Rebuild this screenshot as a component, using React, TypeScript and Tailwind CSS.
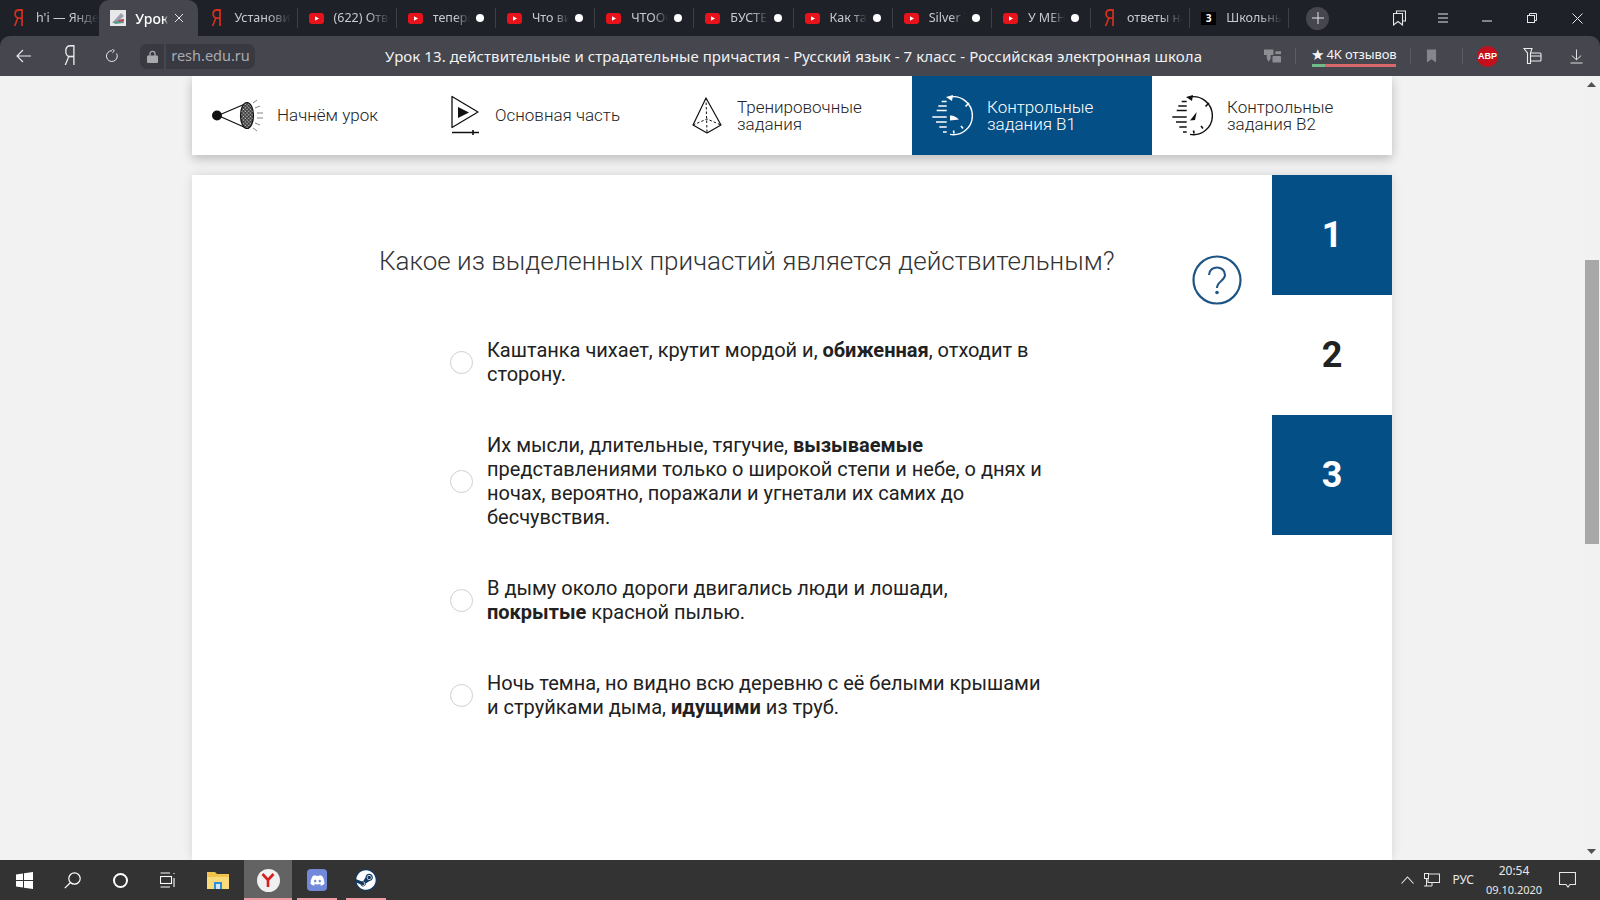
import React from 'react';
import { FaDiscord, FaSteam } from 'react-icons/fa';

type TabItem = { icon: 'ya' | 'yt' | 'resh' | 'school'; title: string; dot?: boolean; active?: boolean };

const tabs: TabItem[] = [
    { icon: 'ya', title: "h'i — Яндекс" },
    { icon: 'resh', title: 'Урок 13. действ', active: true },
    { icon: 'ya', title: 'Установить' },
    { icon: 'yt', title: '(622) Ответы' },
    { icon: 'yt', title: 'теперь', dot: true },
    { icon: 'yt', title: 'Что видно', dot: true },
    { icon: 'yt', title: 'ЧТООО', dot: true },
    { icon: 'yt', title: 'БУСТЕР', dot: true },
    { icon: 'yt', title: 'Как так', dot: true },
    { icon: 'yt', title: 'Silver Tu', dot: true },
    { icon: 'yt', title: 'У МЕНЯ', dot: true },
    { icon: 'ya', title: 'ответы на' },
    { icon: 'school', title: 'Школьные' },
];

const TabIcon = ({ kind }: { kind: TabItem['icon'] }) => {
    if (kind === 'ya') {
        return <span className="w-[15px] shrink-0 scale-x-75 text-center text-[24px] leading-none text-[#d4301c] font-['Roboto',sans-serif]">Я</span>;
    }
    if (kind === 'yt') {
        return (
            <svg width="15" height="11" viewBox="0 0 15 11" className="shrink-0">
                <rect width="15" height="11" rx="3" fill="#e8121a" />
                <path d="M6 3.2 L10 5.5 L6 7.8 Z" fill="#fff" />
            </svg>
        );
    }
    if (kind === 'school') {
        return <span className="flex h-[13px] w-[15px] shrink-0 items-center justify-center bg-black text-[10px] font-bold leading-none text-white">З</span>;
    }
    return (
        <svg width="16" height="16" viewBox="0 0 16 16" className="shrink-0">
            <rect width="16" height="16" fill="#e8e8ea" />
            <path d="M2 13 L11 3 L14 6 L6 13 Z" fill="#9aa0aa" />
            <path d="M3 12 L13 9 L14 13 L5 14 Z" fill="#5b9c8a" />
            <path d="M8 10 L14 9 L14 11 L9 12 Z" fill="#c4485a" />
        </svg>
    );
};

const TabBar = () => (
    <div className="flex h-9 shrink-0 items-stretch bg-[#1f2129]">
        <div className="flex w-[1290px] shrink-0">
            {tabs.map((t, i) => (
                <div
                    key={i}
                    className={
                        t.active
                            ? 'flex h-9 w-[99.2px] shrink-0 items-center rounded-t-[10px] bg-[#45464e] pl-[11px] pr-[14px]'
                            : 'flex h-9 w-[99.2px] shrink-0 items-center pl-[11px]'
                    }
                >
                    <TabIcon kind={t.icon} />
                    <span className={t.active
                        ? "ml-[9px] min-w-0 flex-1 overflow-hidden whitespace-nowrap text-[14px] font-medium text-white font-['Noto_Sans',sans-serif] [mask-image:linear-gradient(to_right,black_88%,transparent)]"
                        : "ml-[10px] min-w-0 flex-1 overflow-hidden whitespace-nowrap text-[12.5px] text-[#c9cad0] font-['Noto_Sans',sans-serif] [mask-image:linear-gradient(to_right,black_60%,transparent)]"}>
                        {t.title}
                    </span>
                    {t.dot && <span className="ml-[6px] h-[8px] w-[8px] shrink-0 rounded-full bg-white" />}
                    {t.active && (
                        <svg width="10" height="10" viewBox="0 0 10 10" className="ml-[6px] shrink-0" stroke="#e6e6e8" strokeWidth="1">
                            <path d="M1 1 L9 9 M9 1 L1 9" />
                        </svg>
                    )}
                    {!t.active && i !== 0 && <span className={t.dot ? 'ml-[11px] h-[20px] w-px shrink-0 bg-[#3e4048]' : 'ml-[6px] h-[20px] w-px shrink-0 bg-[#3e4048]'} />}
                </div>
            ))}
        </div>
        <div className="flex items-center pl-[16px]">
            <span className="flex h-[23px] w-[23px] items-center justify-center rounded-full bg-[#45464e]">
                <svg width="12" height="12" viewBox="0 0 12 12" stroke="#e6e6e8" strokeWidth="1"><path d="M6 0 V12 M0 6 H12" /></svg>
            </span>
        </div>
        <div className="ml-auto flex items-center text-[#e6e6e8]">
            <span className="flex w-[44px] justify-center">
                <svg width="13" height="16" viewBox="0 0 13 16" fill="none" stroke="currentColor" strokeWidth="1.1">
                    <path d="M3.5 3 V1 H12.5 V11 H9.5" /><path d="M0.5 3.5 H9.5 V15 L5 11.5 L0.5 15 Z" />
                </svg>
            </span>
            <span className="flex w-[44px] justify-center">
                <svg width="12" height="10" viewBox="0 0 12 10" stroke="currentColor" strokeWidth="1"><path d="M1 1 H11 M1 5 H11 M1 9 H11" /></svg>
            </span>
            <span className="flex w-[44px] justify-center">
                <svg width="10" height="10" viewBox="0 0 10 10" stroke="currentColor" strokeWidth="1"><path d="M0 8 H10" /></svg>
            </span>
            <span className="flex w-[45px] justify-center">
                <svg width="10" height="10" viewBox="0 0 10 10" fill="none" stroke="currentColor" strokeWidth="1">
                    <rect x="0.5" y="2.5" width="7" height="7" /><path d="M2.5 2.5 V0.5 H9.5 V7.5 H7.5" />
                </svg>
            </span>
            <span className="flex w-[46px] justify-center">
                <svg width="11" height="11" viewBox="0 0 11 11" stroke="currentColor" strokeWidth="1"><path d="M0.5 0.5 L10.5 10.5 M10.5 0.5 L0.5 10.5" /></svg>
            </span>
        </div>
    </div>
);

const Sep = () => <span className="block h-[16px] w-px shrink-0 bg-[#5b5c64]" />;

const AddressBar = () => (
    <div className="flex h-10 shrink-0 items-center rounded-t-[10px] bg-[#45464e] pl-[16px] font-['Noto_Sans',sans-serif]">
        <svg width="16" height="14" viewBox="0 0 16 14" fill="none" stroke="#ececed" strokeWidth="1.1" className="shrink-0">
            <path d="M15 7 H1 M7 1 L1 7 L7 13" />
        </svg>
        <span className="ml-[30px] w-[14px] shrink-0 scale-x-75 text-center text-[27px] font-light leading-none text-[#ececed] font-['Roboto',sans-serif]">Я</span>
        <svg width="14" height="14" viewBox="0 0 14 14" fill="none" stroke="#ececed" strokeWidth="1" className="ml-[29px] shrink-0">
            <path d="M11.6 4.5 A5.4 5.4 0 1 1 7 1.7 M7.4 0 L9.4 2 L7.4 3.8" />
        </svg>
        <span className="ml-[21px] flex h-[25px] w-[24px] shrink-0 items-center justify-center rounded-l-[7px] bg-[#393a41]">
            <svg width="11" height="13" viewBox="0 0 11 13">
                <path d="M3 6 V3.8 A2.5 2.5 0 0 1 8 3.8 V6" fill="none" stroke="#a8a9ae" strokeWidth="1.3" />
                <rect y="5.5" width="11" height="7.5" rx="1" fill="#a8a9ae" />
            </svg>
        </span>
        <span className="ml-[2px] flex h-[25px] w-[89px] shrink-0 items-center justify-center rounded-r-[7px] bg-[#393a41] text-[14.5px] text-[#a9aaaf]">resh.edu.ru</span>
        <span className="ml-[130px] shrink-0 whitespace-nowrap text-[15px] tracking-[0.07px] text-[#f2f2f3]">
            Урок 13. действительные и страдательные причастия - Русский язык - 7 класс - Российская электронная школа
        </span>
        <div className="ml-auto flex items-center">
            <svg width="17" height="16" viewBox="0 0 18 16" className="shrink-0" fill="#8d8e94">
                <path d="M0 1 H10 V7 H7 V11 L5 14 L3 11 V7 H0 Z" />
                <rect x="9" y="8" width="9" height="7" rx="1" />
                <rect x="12" y="3" width="6" height="3" />
            </svg>
            <span className="ml-[14px]"><Sep /></span>
            <div className="ml-[16px] flex w-[84px] shrink-0 flex-col">
                <span className="flex items-center justify-center gap-[2px] whitespace-nowrap text-[13px] leading-[17px] text-[#f5f5f5]">
                    <span className="text-[15px] leading-none">★</span>
                    <span className="tracking-[-0.1px]">4K отзывов</span>
                </span>
                <span className="mt-[1px] flex h-[3px] w-full">
                    <span className="w-[13px] bg-[#6dbb8a]" />
                    <span className="flex-1 bg-[#d8686a]" />
                </span>
            </div>
            <span className="ml-[14px]"><Sep /></span>
            <svg width="11" height="14" viewBox="0 0 12 14" fill="#85868c" className="ml-[15px] shrink-0">
                <path d="M1 0 H11 V14 L6 10.5 L1 14 Z" />
            </svg>
            <span className="ml-[25px]"><Sep /></span>
            <span className="ml-[14px] flex h-[21px] w-[21px] shrink-0 items-center justify-center rounded-full bg-[#c4101c] text-[9px] font-bold leading-none text-white font-['Liberation_Sans',sans-serif]">ABP</span>
            <svg width="19" height="18" viewBox="0 0 19 18" fill="none" stroke="#ececed" strokeWidth="1.1" className="ml-[25px] shrink-0">
                <path d="M1 1.5 H9 L7.5 6 V16.5 H4.5 V6 Z" />
                <path d="M7.5 6 H17 A1 1 0 0 1 18 7 V13 A1 1 0 0 1 17 14 H7.5 M7.5 9 H18" />
            </svg>
            <svg width="13" height="15" viewBox="0 0 14 15" fill="none" stroke="#ececed" strokeWidth="1" className="ml-[28px] mr-[17px] shrink-0">
                <path d="M7 0 V11 M2 6.5 L7 11 L12 6.5 M0.5 14.5 H13.5" />
            </svg>
        </div>
    </div>
);

const Megaphone = () => (
    <svg width="53" height="34" viewBox="0 0 53 34" fill="none" stroke="#111" className="shrink-0">
        <defs>
            <pattern id="hatch" width="2.5" height="2.5" patternUnits="userSpaceOnUse" patternTransform="rotate(45)">
                <rect width="2.5" height="2.5" fill="#d4d4d4" />
                <path d="M0 0 V2.5" stroke="#999" strokeWidth="0.6" />
            </pattern>
        </defs>
        <circle cx="7" cy="16.5" r="5" fill="#111" stroke="none" />
        <path d="M8 16.5 L35 5 M8 16.5 L35 28.5" strokeWidth="1.3" />
        <ellipse cx="37" cy="16.5" rx="6.5" ry="13" fill="url(#hatch)" strokeWidth="1.2" />
        <path d="M43 4 L47 1 M45 9 L50 7 M47 14 L53 14 M47 19 L53 19 M45 24 L50 26 M43 29 L47 32" stroke="#666" strokeWidth="0.8" />
    </svg>
);

const PlayIcon = () => (
    <svg width="31" height="42" viewBox="0 0 31 42" fill="none" stroke="#111" className="shrink-0">
        <path d="M2 1.5 L28 17 L2 32.5 Z" strokeWidth="1.3" strokeLinejoin="round" />
        <path d="M8 12 L19 17.5 L8 23 Z" fill="#111" stroke="none" />
        <path d="M2 37.5 H29 M23 35 V40" strokeWidth="1.6" />
    </svg>
);

const Pyramid = () => (
    <svg width="33" height="38" viewBox="0 0 33 38" fill="none" stroke="#111" className="shrink-0">
        <path d="M16 1 L3 28 L17 36 L31 28 Z" strokeWidth="1.2" strokeLinejoin="round" />
        <path d="M3 28 L17 22 L31 28 M16 1 L17 36" strokeWidth="1" strokeDasharray="2.5 2" />
    </svg>
);

const Stopwatch = ({ color, v2 }: { color: string; v2?: boolean }) => (
    <svg width="43" height="41" viewBox="0 0 43 41" fill="none" stroke={color} className="shrink-0">
        <path d="M20 2 A19 19 0 1 1 20 39.4" strokeWidth="1.4" />
        <path d="M16 2 L23 0 L22 6 Z" fill={color} stroke="none" />
        <path d="M35.5 11.5 L39 8 M24 38.5 L23.5 35.5 M33 33.5 L31 31" strokeWidth="1.6" />
        <path d="M11.7 6.5 H16.7 M8.3 11 H16.7 M6.7 15.5 H16.7 M2.3 22 H16.7 M6 27 H16.7 M9.3 32 H16.7 M13 37 H16.7" strokeWidth="1.3" />
        {v2
            ? <path d="M20 25.5 L26.7 17 L25 25 Z" fill={color} stroke="none" />
            : <path d="M20 20.5 Q24 20 29 24.5 L20 25.5 Z" fill={color} stroke="none" />}
    </svg>
);

const Nav = () => (
    <div className="flex h-[79px] w-[1200px] shrink-0 bg-white shadow-[0_4px_10px_rgba(0,0,0,0.22)] font-['Roboto',sans-serif] text-[17px] font-light leading-[17px] text-[#222]">
        <div className="flex w-[240px] items-center gap-[14px] pl-[18px]"><Megaphone /><span>Начнём урок</span></div>
        <div className="flex w-[240px] items-center gap-[14px] pl-[18px]"><PlayIcon /><span>Основная часть</span></div>
        <div className="flex w-[240px] items-center gap-[14px] pl-[18px]"><Pyramid /><span>Тренировочные<br />задания</span></div>
        <div className="flex w-[240px] items-center gap-[14px] bg-[#054f87] pl-[18px] text-white"><Stopwatch color="#fff" /><span>Контрольные<br />задания В1</span></div>
        <div className="flex w-[240px] items-center gap-[14px] pl-[18px]"><Stopwatch color="#111" v2 /><span>Контрольные<br />задания В2</span></div>
    </div>
);

const options: React.ReactNode[] = [
    <>Каштанка чихает, крутит мордой и, <b>обиженная</b>, отходит в сторону.</>,
    <>Их мысли, длительные, тягучие, <b>вызываемые</b> представлениями только о широкой степи и небе, о днях и ночах, вероятно, поражали и угнетали их самих до бесчувствия.</>,
    <>В дыму около дороги двигались люди и лошади, <b>покрытые</b> красной пылью.</>,
    <>Ночь темна, но видно всю деревню с её белыми крышами и струйками дыма, <b>идущими</b> из труб.</>,
];

const Question = () => (
    <div className="mt-5 flex min-h-0 w-[1200px] flex-1 bg-white shadow-[0_0_10px_rgba(0,0,0,0.12)] font-['Roboto',sans-serif]">
        <div className="min-w-0 flex-1">
            <div className="flex items-start pl-[187px] pt-[70px]">
                <h2 className="w-[790px] text-[26px] font-light leading-[32px] text-[#333]">
                    Какое из выделенных причастий является действительным?
                </h2>
                <svg width="50" height="50" viewBox="0 0 50 50" fill="none" className="ml-[23px] mt-[10px] shrink-0">
                    <circle cx="25" cy="25" r="23.5" stroke="#1f5585" strokeWidth="2.2" />
                    <path d="M17 20 C17 10 33 10 33 20 C33 26 25 26 25 33" stroke="#1f5585" strokeWidth="2" />
                    <circle cx="25" cy="37.5" r="1.8" fill="#1f5585" />
                </svg>
            </div>
            <div className="ml-[258px] mt-[33px] flex w-[600px] flex-col gap-[47px]">
                {options.map((o, i) => (
                    <label key={i} className="flex items-center gap-[14px]">
                        <span className="h-[23px] w-[23px] shrink-0 rounded-full border border-[#cfcfcf] bg-white" />
                        <span className="block text-[20px] leading-[24px] text-[#212121]">{o}</span>
                    </label>
                ))}
            </div>
        </div>
        <div className="w-[120px] shrink-0 text-[36px] font-bold leading-none">
            <div className="flex h-[120px] items-center justify-center bg-[#054f87] text-white">1</div>
            <div className="flex h-[120px] items-center justify-center text-[#222]">2</div>
            <div className="flex h-[120px] items-center justify-center bg-[#054f87] text-white">3</div>
        </div>
    </div>
);

const Scrollbar = () => (
    <div className="flex w-[17px] shrink-0 flex-col items-center bg-[#f1f1f1]">
        <svg width="9" height="5" viewBox="0 0 9 5" className="mt-[6px] shrink-0"><path d="M0 5 L4.5 0 L9 5 Z" fill="#505050" /></svg>
        <div className="mt-[173px] h-[284px] w-[14px] shrink-0 bg-[#a8a8a8]" />
        <svg width="9" height="5" viewBox="0 0 9 5" className="mb-[6px] mt-auto shrink-0"><path d="M0 0 L4.5 5 L9 0 Z" fill="#505050" /></svg>
    </div>
);

const TaskIcon = ({ w, active, line, children }: { w: number; active?: boolean; line?: boolean; children: React.ReactNode }) => (
    <div style={{ width: w }} className={active ? 'relative flex h-10 shrink-0 items-center justify-center bg-[#636363]' : 'relative flex h-10 shrink-0 items-center justify-center'}>
        {children}
        {line && <span className="absolute inset-x-0 bottom-0 h-[2px] bg-[#f09aa4]" />}
    </div>
);

const Taskbar = () => (
    <div className="flex h-10 shrink-0 items-center bg-[#333] text-[#e8e8e8] font-['Noto_Sans',sans-serif]">
        <TaskIcon w={48}>
            <svg width="17" height="17" viewBox="0 0 17 17" fill="#fff"><path d="M0 2.4 L7 1.4 V8 H0 Z M8 1.2 L17 0 V8 H8 Z M0 9 H7 V15.6 L0 14.6 Z M8 9 H17 V17 L8 15.8 Z" /></svg>
        </TaskIcon>
        <TaskIcon w={48}>
            <svg width="17" height="17" viewBox="0 0 17 17" fill="none" stroke="#fff" strokeWidth="1.2"><circle cx="10.5" cy="6.5" r="5.7" /><path d="M6.5 10.5 L0.8 16.2" /></svg>
        </TaskIcon>
        <TaskIcon w={48}>
            <span className="h-[15px] w-[15px] rounded-full border-2 border-white" />
        </TaskIcon>
        <TaskIcon w={48}>
            <svg width="16" height="16" viewBox="0 0 16 16" fill="none" stroke="#fff" strokeWidth="1.1"><path d="M0.5 1 H10 M0.5 15 H10 M14 1 V2 M14 6 V15" /><rect x="0.5" y="4.5" width="11" height="7" /></svg>
        </TaskIcon>
        <TaskIcon w={52}>
            <svg width="22" height="19" viewBox="0 0 22 19">
                <path d="M0 1 H8 L10 3 H22 V18 H0 Z" fill="#f3c34f" />
                <path d="M0 6 H22 V18 H0 Z" fill="#fadb7a" />
                <path d="M7 11 H15 V18 H7 Z" fill="#2f8fd6" />
                <path d="M9 13 H13 V18 H9 Z" fill="#cfe6f7" />
            </svg>
        </TaskIcon>
        <TaskIcon w={48} active line>
            <span className="relative flex h-[23px] w-[23px] items-center justify-center rounded-full bg-[#f0f0f0]">
                <svg width="14" height="14" viewBox="0 0 14 14" fill="none" stroke="#d81e1e" strokeWidth="2.6"><path d="M1.5 1 L7 7 L12.5 1 M7 7 V14" /></svg>
            </span>
        </TaskIcon>
        <div className="ml-[5px]">
            <TaskIcon w={40} line>
                <span className="flex h-[22px] w-[20px] items-center justify-center rounded-[4px] bg-[#7289da]"><FaDiscord size={15} color="#fff" /></span>
            </TaskIcon>
        </div>
        <div className="ml-[9px]">
            <TaskIcon w={40} line>
                <span className="flex h-[22px] w-[22px] items-center justify-center rounded-full bg-[#123a63]"><FaSteam size={20} color="#fff" /></span>
            </TaskIcon>
        </div>
        <div className="ml-auto flex items-center">
            <svg width="13" height="8" viewBox="0 0 13 8" fill="none" stroke="#e8e8e8" strokeWidth="1.1"><path d="M0.5 7.5 L6.5 1 L12.5 7.5" /></svg>
            <svg width="16" height="14" viewBox="0 0 16 14" fill="none" stroke="#e8e8e8" strokeWidth="1" className="ml-[10px]">
                <rect x="4" y="1" width="11.5" height="8.5" /><rect x="0.5" y="0.5" width="4" height="5" fill="#333" /><path d="M2.5 6 V13 M0 13 H8 M8 9.5 V13" />
            </svg>
            <span className="ml-[12px] text-[12px]">РУС</span>
            <div className="ml-[12px] flex w-[56px] flex-col items-center text-[11px] leading-[19px]">
                <span className="text-[12px]">20:54</span>
                <span>09.10.2020</span>
            </div>
            <svg width="17" height="16" viewBox="0 0 17 16" fill="none" stroke="#e8e8e8" strokeWidth="1.1" className="ml-[17px] mr-[24px]">
                <path d="M0.5 0.5 H16.5 V12.5 H11 L9 15 L7 12.5 H0.5 Z" />
            </svg>
        </div>
    </div>
);

const App: React.FC = () => (
    <div className="flex h-screen flex-col overflow-hidden bg-[#f2f2f2]">
        <div className="bg-[#1f2129]">
            <TabBar />
            <AddressBar />
        </div>
        <div className="flex min-h-0 flex-1">
            <main className="flex min-w-0 flex-1 flex-col overflow-hidden pl-[192px]">
                <Nav />
                <Question />
            </main>
            <Scrollbar />
        </div>
        <Taskbar />
    </div>
);

export default App;
